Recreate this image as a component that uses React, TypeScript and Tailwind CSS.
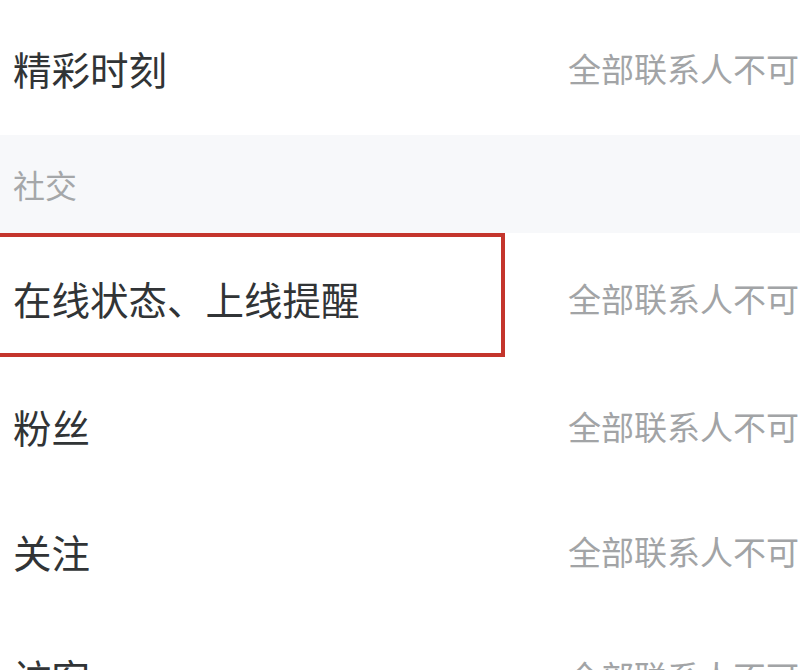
const font = { fontFamily: '"Noto Sans CJK SC", "Noto Sans", sans-serif' };

type Row = { label: string; value: string; height: string; highlight?: boolean };

const social: Row[] = [
  { label: "在线状态、上线提醒", value: "全部联系人不可见", height: "h-[130px]", highlight: true },
  { label: "粉丝", value: "全部联系人不可见", height: "h-[126px]" },
  { label: "关注", value: "全部联系人不可见", height: "h-[125px]" },
  { label: "访客", value: "全部联系人不可见", height: "h-[125px]" },
];

function SettingRow({ label, value, height, highlight }: Row) {
  return (
    <div className={`relative flex items-center bg-white ${height}`}>
      <div className="w-[568px] shrink-0 pl-[13px] text-[38.5px] leading-none text-[#313436]">{label}</div>
      <div className="whitespace-nowrap text-[33px] leading-none text-[#a2a4a6]">{value}</div>
      {highlight && (
        <div className="absolute left-[-10px] top-0 h-[124px] w-[515px] border-4 border-[#c4352c]" />
      )}
    </div>
  );
}

export default function App() {
  return (
    <div className="h-[670px] w-[800px] overflow-hidden bg-white" style={font}>
      <SettingRow label="精彩时刻" value="全部联系人不可见" height="h-[135px] pt-[1px]" />
      <div className="flex h-[98px] items-center bg-[#f7f8fa] pl-[13px] text-[32px] leading-none text-[#a5a7a9]">
        社交
      </div>
      {social.map((row) => (
        <SettingRow key={row.label} {...row} />
      ))}
    </div>
  );
}
